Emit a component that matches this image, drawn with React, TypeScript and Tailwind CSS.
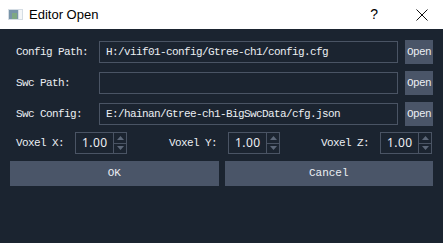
import React from 'react';

const mono = { fontFamily: '"Liberation Mono", "DejaVu Sans Mono", monospace' };

function Field({ value }: { value?: string }) {
  return (
    <div className="flex h-[22px] flex-1 items-center border border-[#4a5464] px-[6px] text-[11px] tracking-[-0.6px] text-[#eceff3]">
      {value}
    </div>
  );
}

function OpenButton() {
  return (
    <div className="flex h-[24px] w-[28px] items-center justify-center bg-[#4a5568] text-[11px] tracking-[-0.6px] text-[#eceff3]">
      Open
    </div>
  );
}

function PathRow({ label, value }: { label: string; value?: string }) {
  return (
    <div className="flex h-[24px] items-center">
      <div className="w-[89px] pl-[6px] text-[11px] tracking-[-0.6px] text-[#eceff3]">{label}</div>
      <Field value={value} />
      <div className="ml-[7px]">
        <OpenButton />
      </div>
    </div>
  );
}

function SpinBox({ value }: { value: string }) {
  return (
    <div className="flex h-[22px] w-[52px] border border-[#4a5464]">
      <div className="flex flex-1 items-center pl-[6px] text-[12px] tracking-[0.4px] text-[#eceff3]" style={{ fontFamily: '"Noto Sans", sans-serif' }}>
        {value}
      </div>
      <div className="flex w-[13px] flex-col border-l border-[#4a5464]">
        <div className="flex flex-1 items-center justify-center border-b border-[#4a5464]">
          <svg width="7" height="4" viewBox="0 0 7 4">
            <path d="M0 4 L3.5 0 L7 4 Z" fill="#5c6778" />
          </svg>
        </div>
        <div className="flex flex-1 items-center justify-center">
          <svg width="7" height="4" viewBox="0 0 7 4">
            <path d="M0 0 L3.5 4 L7 0 Z" fill="#5c6778" />
          </svg>
        </div>
      </div>
    </div>
  );
}

export default function App() {
  return (
    <div className="flex h-[243px] w-[443px] flex-col bg-[#1b2430]">
      <div className="flex h-[29px] items-center bg-white" style={{ fontFamily: '"Liberation Sans", Arial, sans-serif' }}>
        <svg className="ml-[8px]" width="15" height="11" viewBox="0 0 15 11">
          <rect x="0" y="0" width="15" height="11" fill="#d5dde4" />
          <rect x="1" y="1" width="9" height="9" fill="#7894a8" />
          <rect x="4" y="4" width="5" height="6" fill="#7fa883" />
          <rect x="11" y="1" width="3" height="9" fill="#f4f6f8" />
        </svg>
        <span className="ml-[6px] text-[13px] text-black">Editor Open</span>
        <span className="ml-auto text-[14px] text-black">?</span>
        <svg className="ml-[38px] mr-[15px]" width="12" height="12" viewBox="0 0 12 12">
          <path d="M0.5 0.5 L11.5 11.5 M11.5 0.5 L0.5 11.5" stroke="#111" strokeWidth="1" />
        </svg>
      </div>
      <div className="flex flex-col px-[10px] pt-[11px]" style={mono}>
        <div className="flex flex-col gap-[7px]">
          <PathRow label="Config Path:" value="H:/viif01-config/Gtree-ch1/config.cfg" />
          <PathRow label="Swc Path:" />
          <PathRow label="Swc Config:" value="E:/hainan/Gtree-ch1-BigSwcData/cfg.json" />
        </div>
        <div className="mt-[6px] flex h-[22px] items-center text-[11px] tracking-[-0.6px] text-[#eceff3]">
          <div className="w-[65px] pl-[6px]">Voxel X:</div>
          <SpinBox value="1.00" />
          <div className="w-[101px] pl-[42px]">Voxel Y:</div>
          <SpinBox value="1.00" />
          <div className="w-[100px] pl-[41px]">Voxel Z:</div>
          <SpinBox value="1.00" />
        </div>
        <div className="mt-[7px] flex gap-[6px]">
          <div className="flex h-[25px] flex-1 items-center justify-center bg-[#4a5568] text-[11px] text-[#eceff3]">OK</div>
          <div className="flex h-[25px] flex-1 items-center justify-center bg-[#4a5568] text-[11px] text-[#eceff3]">Cancel</div>
        </div>
      </div>
    </div>
  );
}
